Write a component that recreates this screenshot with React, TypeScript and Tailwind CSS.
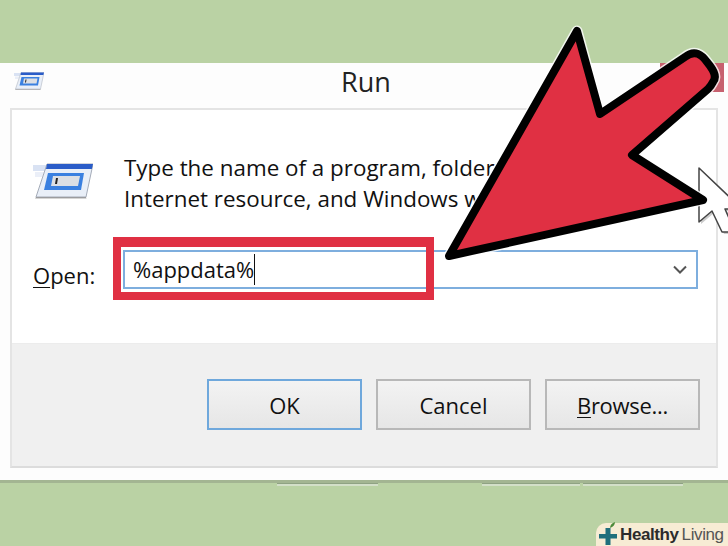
const font = { fontFamily: '"Open Sans", "Noto Sans", sans-serif' };

const ARROW =
  'M449 256 L577 31 L600 114 L685 57 C695 49 702 55 707 62 C712 68 718 76 713 82 C711 86 710 87 708 89 L632 155 L703 200 Z';

function RunIcon({ className }: { className: string }) {
  return (
    <svg className={className} viewBox="0 0 60 36">
      <path d="M0 2h14l-2 6H0z" fill="#c9d6ee" opacity="0.7" />
      <path d="M2 9h9l-2 5H2z" fill="#dde5f3" opacity="0.6" />
      <path d="M14 1h46l-7 33H3z" fill="#e9eff8" stroke="#a4abb8" strokeWidth="1" />
      <path d="M14 1h46l-1.2 5H13z" fill="#2a5cc8" />
      <path d="M15 10h36l-3 17H11z" fill="#3a80e0" />
      <path d="M20 13h27l-2 10H18z" fill="#dcdfe4" />
      <path d="M23 15h2l-1 6h-2z" fill="#222" />
      <path d="M3 34h50l.5 1.5H2z" fill="#777" opacity="0.6" />
    </svg>
  );
}

function DialogButton({ focused, children }: { focused?: boolean; children: React.ReactNode }) {
  return (
    <button
      className={`w-[155px] h-[51px] border-2 pt-[1px] bg-gradient-to-b from-[#f3f3f3] to-[#e6e6e6] text-[22px] text-[#111] ${
        focused ? 'border-[#6fa8dc]' : 'border-[#b8b8b8]'
      }`}
    >
      {children}
    </button>
  );
}

export default function App() {
  return (
    <div className="relative w-[728px] h-[546px] overflow-hidden bg-[#bad2a4] flex flex-col" style={font}>
      <div className="h-[63px] shrink-0" />

      {/* Run window */}
      <div className="h-[420px] shrink-0 bg-[#fdfdfd] flex flex-col px-[10px] border-b-[3px] border-[#a3b592]">
        <div className="relative h-[45px] shrink-0 flex items-center justify-center">
          <RunIcon className="absolute left-[4px] top-[9px] w-[30px] h-[18px]" />
          <span className="text-[27px] text-[#222] -mt-[7px] ml-[4px]">Run</span>
        </div>

        <div className="h-[360px] border-2 border-[#e4e4e4] border-b-[#dcdcdc] flex flex-col">
          <div className="h-[233px] shrink-0 bg-white px-[21px] flex flex-col">
            <div className="flex pt-[41px] gap-[31px]">
              <RunIcon className="w-[60px] h-[36px] mt-[12px] shrink-0" />
              <p className="text-[22.4px] leading-[31px] text-[#111] whitespace-nowrap mt-[1px]">
                Type the name of a program, folder, document, or
                <br />
                Internet resource, and Windows will open it for you.
              </p>
            </div>
            <div className="flex items-center mt-[36px]">
              <span className="text-[22px] text-[#111] w-[90px] shrink-0 pt-[2px] translate-y-[5px]">
                <span className="underline underline-offset-[3px] decoration-1">O</span>pen:
              </span>
              <div className="relative w-[575px] h-[39px] shrink-0 border-2 border-[#7eaede] bg-white flex items-center justify-between pl-[8px] pr-[8px]">
                <span className="text-[22px] text-[#111] border-r border-[#111] leading-[31px]">%appdata%</span>
                <svg className="w-[16px] h-[10px]" viewBox="0 0 16 10" fill="none" stroke="#555" strokeWidth="2">
                  <path d="M2 1.5l6 6 6-6" />
                </svg>
                {/* red highlight box */}
                <div className="absolute left-[-12px] top-[-15px] w-[321px] h-[63px] border-x-[8px] border-t-[10px] border-b-[8px] border-[#e03043]" />
              </div>
            </div>
          </div>

          <div className="flex-1 bg-[#f0f0f0] border-t border-[#ececec] flex gap-[14px] pl-[195px] pt-[35px]">
            <DialogButton focused>OK</DialogButton>
            <DialogButton>Cancel</DialogButton>
            <DialogButton>
              <span className="tracking-[-0.3px]">
                <span className="underline underline-offset-[3px] decoration-1">B</span>rowse...
              </span>
            </DialogButton>
          </div>
        </div>
      </div>

      {/* buttons of the window behind */}
      <div className="flex h-[4px] shrink-0 pl-[277px]">
        <div className="w-[101px] h-[3px] bg-[#d3dfc8] border-t border-[#8fa283]" />
        <div className="w-[98px] h-[3px] ml-[104px] bg-[#d3dfc8] border-t border-[#8fa283]" />
        <div className="w-[100px] h-[3px] ml-[3px] bg-[#d3dfc8] border-t border-[#8fa283]" />
      </div>

      {/* watermark */}
      <div
        className="absolute right-0 bottom-0 h-[23px] w-[132px] bg-[#f7ecd4] rounded-tl-[10px] flex items-center pl-[3px] gap-[3px] whitespace-nowrap"
        style={{ fontFamily: '"Liberation Sans", sans-serif' }}
      >
        <svg className="w-[18px] h-[20px] shrink-0 overflow-visible" viewBox="0 0 18 20">
          <path d="M6.5 3h5v6H18v4.5h-6.500V20h-5v-6.500H0V9h6.500z" fill="#1f6f7c" />
          <path d="M11 3c0-3 2-5 5-6 0 3-2 5-5 6z" fill="#4d8a3a" />
        </svg>
        <span className="text-[17px] leading-none tracking-[-0.4px] text-[#2b2b2b] font-bold">Healthy</span>
        <span className="text-[17px] leading-none tracking-[-0.4px] text-[#555]">Living</span>
      </div>

      {/* close button showing behind the arrow */}
      <div className="absolute left-[660px] top-[63px] w-[64px] h-[29px] bg-[#c7616f]" />

      {/* mouse pointer and big arrow */}
      <svg className="absolute left-0 top-0 w-[728px] h-[546px] pointer-events-none" viewBox="0 0 728 546">
        <path d="M701 170v54l13-11 10 21h13l-10-23h17z" fill="#000" opacity="0.2" />
        <path d="M699 168v54l13-11 10 21h13l-10-23h17z" fill="#fff" stroke="#444" strokeWidth="1.500" strokeLinejoin="round" />
        <path d={ARROW} fill="none" stroke="#fff" strokeWidth="11" strokeLinejoin="round" opacity="0.8" />
        <path d={ARROW} fill="#e03043" stroke="#000" strokeWidth="8" strokeLinejoin="round" />
      </svg>
    </div>
  );
}
